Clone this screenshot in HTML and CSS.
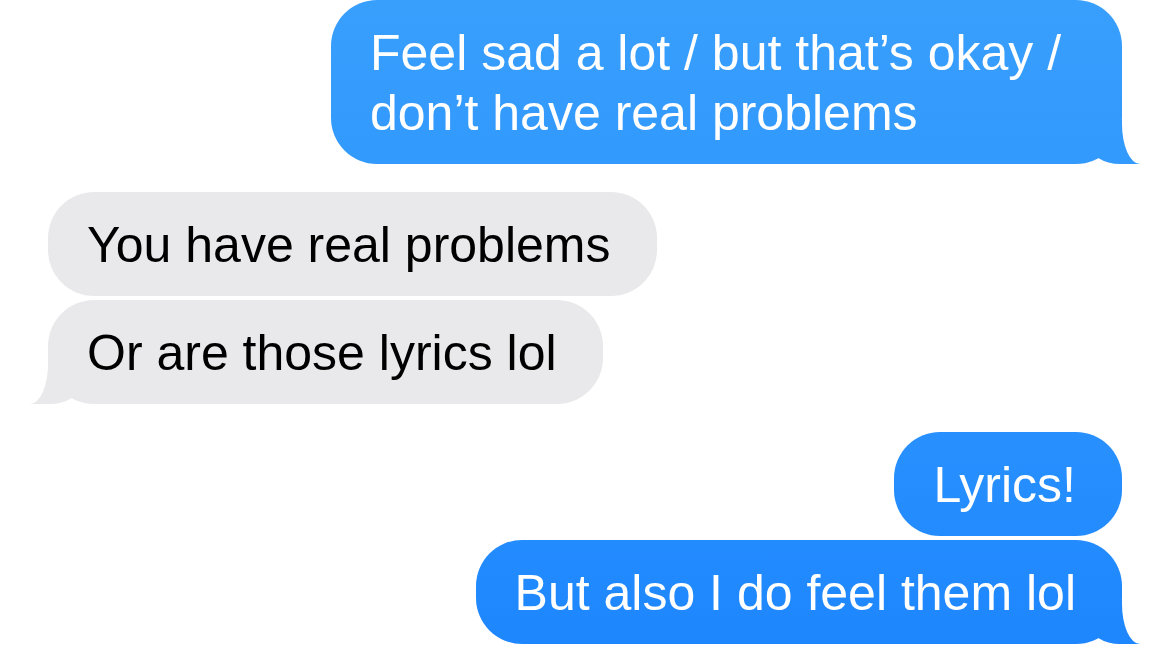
FILE: index.html
```html
<!DOCTYPE html>
<html lang="en">
<head>
<meta charset="utf-8">
<title>Messages</title>
<link rel="stylesheet" href="styles.css">
</head>
<body>
<main class="chat">
  <div class="group group-sent">
    <p class="bubble sent tail">Feel sad a lot / but that’s okay / don’t have real problems</p>
  </div>
  <div class="group group-received">
    <p class="bubble received">You have real problems</p>
    <p class="bubble received tail">Or are those lyrics lol</p>
  </div>
  <div class="group group-sent">
    <p class="bubble sent">Lyrics!</p>
    <p class="bubble sent tail">But also I do feel them lol</p>
  </div>
</main>
</body>
</html>
```

FILE: styles.css
```css
html, body {
  margin: 0;
  padding: 0;
  background: #ffffff;
}

body {
  font-family: "Liberation Sans", Arial, sans-serif;
  overflow: hidden;
}

.chat {
  display: flex;
  flex-direction: column;
  gap: 28px;
  padding: 0 48px;
  width: 1170px;
  height: 655px;
  box-sizing: border-box;
}

.group {
  display: flex;
  flex-direction: column;
  gap: 4px;
}

.group-sent {
  align-items: flex-end;
}

.group-received {
  align-items: flex-start;
}

.bubble {
  position: relative;
  margin: 0;
  max-width: 791px;
  box-sizing: border-box;
  padding: 23px 46px 21px 39px;
  border-radius: 46px;
  font-size: 50px;
  line-height: 60px;
}

.sent {
  color: #ffffff;
  background: linear-gradient(180deg, #389ffd 0%, #2a92fe 60%, #1d86fe 100%) fixed;
}

.received {
  color: #000000;
  background: #e9e9eb;
}

/* tails */
.tail::before,
.tail::after {
  content: "";
  position: absolute;
  bottom: 0;
}

.sent.tail::before {
  right: -18px;
  width: 50px;
  height: 44px;
  background: linear-gradient(180deg, #389ffd 0%, #2a92fe 60%, #1d86fe 100%) fixed;
  border-bottom-left-radius: 30px 20px;
  z-index: 0;
}

.sent.tail::after {
  right: -40px;
  width: 40px;
  height: 44px;
  background: #ffffff;
  border-bottom-left-radius: 18px 40px;
  z-index: 1;
}

.received.tail::before {
  left: -18px;
  width: 50px;
  height: 44px;
  background: #e9e9eb;
  border-bottom-right-radius: 30px 20px;
  z-index: 0;
}

.received.tail::after {
  left: -40px;
  width: 40px;
  height: 44px;
  background: #ffffff;
  border-bottom-right-radius: 18px 40px;
  z-index: 1;
}
```
